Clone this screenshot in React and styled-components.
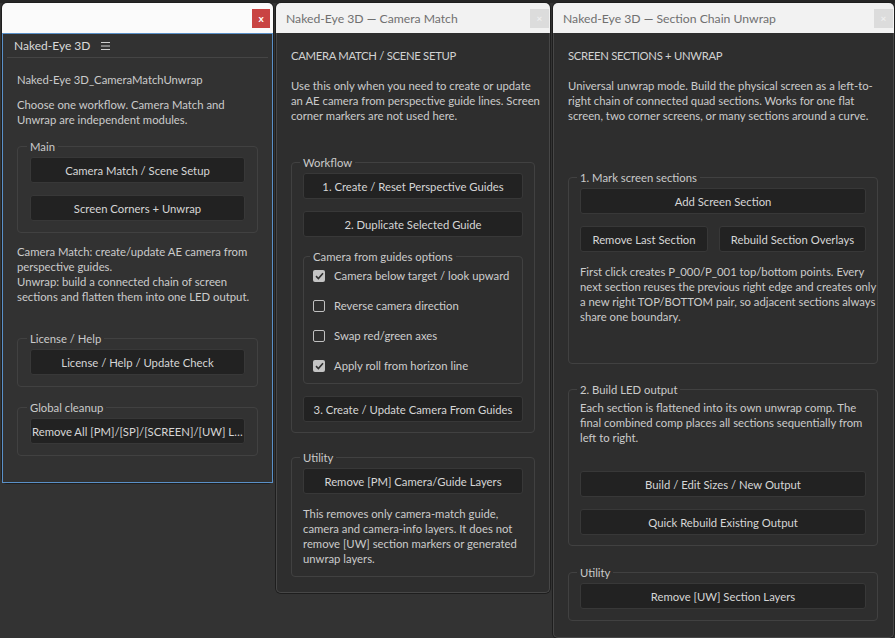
import React from "react";
import styled, { createGlobalStyle } from "styled-components";

const GlobalStyle = createGlobalStyle`
  html, body {
    margin: 0;
    background: #333333;
  }
  body {
    font-family: Lato, "Open Sans", "Liberation Sans", sans-serif;
    font-size: 11.3px;
    line-height: 15px;
    color: #cdcdcd;
  }
  * {
    box-sizing: border-box;
  }
`;

const Desktop = styled.div`
  display: flex;
  align-items: flex-start;
  gap: 3px;
  padding: 3px 1px 0 2px;
  height: 638px;
  background: linear-gradient(#262626 0 3px, #333333 3px);
`;

const Window = styled.div`
  width: ${(p) => p.$w}px;
  flex: none;
  display: flex;
  flex-direction: column;
  border-radius: 5px;
  box-shadow: 0 0 0 1px #1e1e1e;
`;

const TitleBar = styled.div`
  height: 30px;
  display: flex;
  align-items: center;
  justify-content: space-between;
  padding: 0 ${(p) => (p.$red ? 3 : 1)}px 0 10px;
  background: ${(p) => (p.$red ? "#fbfbfb" : "#f2f2f2")};
  border-radius: 5px 5px 0 0;
  color: #707070;
  font-size: 12.2px;
`;

const CloseBox = styled.div`
  width: ${(p) => (p.$red ? 18 : 19)}px;
  height: 19px;
  display: flex;
  align-items: center;
  justify-content: center;
  background: ${(p) => (p.$red ? "#c94443" : "#dcdcdc")};
  color: ${(p) => (p.$red ? "#ffffff" : "#efefef")};
  font-size: 10px;
  font-weight: bold;
  line-height: 1;
`;

const Panel = styled.div`
  border: 1px solid #5a90c8;
  background: #323232;
  padding-bottom: 26px;
`;

const PanelHeader = styled.div`
  height: 23px;
  display: flex;
  align-items: center;
  gap: 11px;
  padding-left: 11px;
  color: #dadada;
  font-size: 12px;
`;

const Separator = styled.div`
  height: 1px;
  margin: 0 4px;
  background: #454545;
`;

const PanelContent = styled.div`
  padding: 0 14px;
`;

const Body = styled.div`
  background: #2e2e2e;
  border: 1px solid #474747;
  border-top: none;
  border-radius: 0 0 5px 5px;
  padding: 15px ${(p) => p.$pr || 14}px ${(p) => p.$pb}px 14px;
`;

const Heading = styled.div`
  color: #d2d2d2;
  white-space: nowrap;
  letter-spacing: -0.3px;
`;

const Text = styled.p`
  margin: ${(p) => p.$mt || 0}px 0 0;
  white-space: nowrap;
  color: #cbcbcb;
`;

const Group = styled.fieldset`
  margin: ${(p) => p.$mt || 0}px 0 0;
  padding: ${(p) => p.$pt ?? 3}px ${(p) => p.$px || 11}px ${(p) => p.$pb || 10}px;
  border: 1px solid #414141;
  border-radius: 4px;
  min-width: 0;
`;

const Legend = styled.legend`
  padding: 0 3px;
  margin-left: -3px;
  color: #cacaca;
  line-height: 15px;
  white-space: nowrap;
`;

const Button = styled.div`
  height: 26px;
  width: ${(p) => (p.$w ? `${p.$w}px` : "100%")};
  flex: ${(p) => (p.$grow ? "1" : "none")};
  margin-top: ${(p) => p.$mt || 0}px;
  display: flex;
  align-items: center;
  justify-content: ${(p) => (p.$clip ? "flex-start" : "center")};
  padding: 0 ${(p) => (p.$clip ? 1 : 6)}px;
  background: #222222;
  border: 1px solid #383838;
  border-radius: 3px;
  color: #d6d6d6;
  white-space: nowrap;
  overflow: hidden;
  span {
    overflow: hidden;
    text-overflow: ellipsis;
  }
`;

const ButtonRow = styled.div`
  display: flex;
  gap: 11px;
  margin-top: ${(p) => p.$mt || 0}px;
`;

const CheckRow = styled.label`
  display: flex;
  align-items: center;
  gap: 9px;
  height: 15px;
  margin-top: ${(p) => p.$mt || 0}px;
  white-space: nowrap;
  color: #cdcdcd;
`;

const Box = styled.span`
  width: 12px;
  height: 12px;
  flex: none;
  display: flex;
  align-items: center;
  justify-content: center;
  border-radius: 2px;
  background: ${(p) => (p.$on ? "#c4c4c4" : "transparent")};
  border: ${(p) => (p.$on ? "none" : "1.5px solid #c0c0c0")};
`;

const MenuIcon = () => (
  <svg width="9" height="8" viewBox="0 0 9 8">
    <path d="M0 0.5H9M0 4H9M0 7.5H9" stroke="#cfcfcf" strokeWidth="1" />
  </svg>
);

const Check = ({ on, children, mt }) => (
  <CheckRow $mt={mt}>
    <Box $on={on}>
      {on && (
        <svg width="9" height="8" viewBox="0 0 9 8">
          <path d="M1 4.2L3.4 6.5L8 1.2" fill="none" stroke="#303030" strokeWidth="1.6" />
        </svg>
      )}
    </Box>
    {children}
  </CheckRow>
);

function LauncherWindow() {
  return (
    <Window $w={271}>
      <TitleBar $red>
        <span />
        <CloseBox $red>x</CloseBox>
      </TitleBar>
      <Panel>
        <PanelHeader>
          Naked-Eye 3D
          <MenuIcon />
        </PanelHeader>
        <Separator />
        <PanelContent>
          <Text $mt={14}>Naked-Eye 3D_CameraMatchUnwrap</Text>
          <Text $mt={10}>
            Choose one workflow. Camera Match and
            <br />
            Unwrap are independent modules.
          </Text>
          <Group $mt={12} $px={12} $pb={11}>
            <Legend>Main</Legend>
            <Button $mt={0}>Camera Match / Scene Setup</Button>
            <Button $mt={12}>Screen Corners + Unwrap</Button>
          </Group>
          <Text $mt={11}>
            Camera Match: create/update AE camera from
            <br />
            perspective guides.
            <br />
            Unwrap: build a connected chain of screen
            <br />
            sections and flatten them into one LED output.
          </Text>
          <Group $mt={27} $px={12} $pb={11}>
            <Legend>License / Help</Legend>
            <Button>License / Help / Update Check</Button>
          </Group>
          <Group $mt={13} $px={12} $pb={11}>
            <Legend>Global cleanup</Legend>
            <Button $clip>
              <span>Remove All [PM]/[SP]/[SCREEN]/[UW] Layers</span>
            </Button>
          </Group>
        </PanelContent>
      </Panel>
    </Window>
  );
}

function CameraMatchWindow() {
  return (
    <Window $w={274}>
      <TitleBar>
        Naked-Eye 3D — Camera Match
        <CloseBox>×</CloseBox>
      </TitleBar>
      <Body $pb={15}>
        <Heading>CAMERA MATCH / SCENE SETUP</Heading>
        <Text $mt={15}>
          Use this only when you need to create or update
          <br />
          an AE camera from perspective guide lines. Screen
          <br />
          corner markers are not used here.
        </Text>
        <Group $mt={32}>
          <Legend>Workflow</Legend>
          <Button>1. Create / Reset Perspective Guides</Button>
          <Button $mt={12}>2. Duplicate Selected Guide</Button>
          <Group $mt={12} $px={9} $pt={1} $pb={10}>
            <Legend>Camera from guides options</Legend>
            <Check on mt={3}>
              Camera below target / look upward
            </Check>
            <Check mt={15}>Reverse camera direction</Check>
            <Check mt={15}>Swap red/green axes</Check>
            <Check on mt={15}>
              Apply roll from horizon line
            </Check>
          </Group>
          <Button $mt={12}>3. Create / Update Camera From Guides</Button>
        </Group>
        <Group $mt={17}>
          <Legend>Utility</Legend>
          <Button>Remove [PM] Camera/Guide Layers</Button>
          <Text $mt={12}>
            This removes only camera-match guide,
            <br />
            camera and camera-info layers. It does not
            <br />
            remove [UW] section markers or generated
            <br />
            unwrap layers.
          </Text>
        </Group>
      </Body>
    </Window>
  );
}

function UnwrapWindow() {
  return (
    <Window $w={341}>
      <TitleBar>
        Naked-Eye 3D — Section Chain Unwrap
        <CloseBox>×</CloseBox>
      </TitleBar>
      <Body $pb={16} $pr={15}>
        <Heading>SCREEN SECTIONS + UNWRAP</Heading>
        <Text $mt={15}>
          Universal unwrap mode. Build the physical screen as a left-to-
          <br />
          right chain of connected quad sections. Works for one flat
          <br />
          screen, two corner screens, or many sections around a curve.
        </Text>
        <Group $mt={47} $pb={39}>
          <Legend>1. Mark screen sections</Legend>
          <Button>Add Screen Section</Button>
          <ButtonRow $mt={12}>
            <Button $w={128}>Remove Last Section</Button>
            <Button $grow>Rebuild Section Overlays</Button>
          </ButtonRow>
          <Text $mt={12}>
            First click creates P_000/P_001 top/bottom points. Every
            <br />
            next section reuses the previous right edge and creates only
            <br />
            a new right TOP/BOTTOM pair, so adjacent sections always
            <br />
            share one boundary.
          </Text>
        </Group>
        <Group $mt={18}>
          <Legend>2. Build LED output</Legend>
          <Text $mt={0}>
            Each section is flattened into its own unwrap comp. The
            <br />
            final combined comp places all sections sequentially from
            <br />
            left to right.
          </Text>
          <Button $mt={26}>Build / Edit Sizes / New Output</Button>
          <Button $mt={12}>Quick Rebuild Existing Output</Button>
        </Group>
        <Group $mt={19} $pb={11}>
          <Legend>Utility</Legend>
          <Button>Remove [UW] Section Layers</Button>
        </Group>
      </Body>
    </Window>
  );
}

export default function App() {
  return (
    <>
      <GlobalStyle />
      <Desktop>
        <LauncherWindow />
        <CameraMatchWindow />
        <UnwrapWindow />
      </Desktop>
    </>
  );
}
